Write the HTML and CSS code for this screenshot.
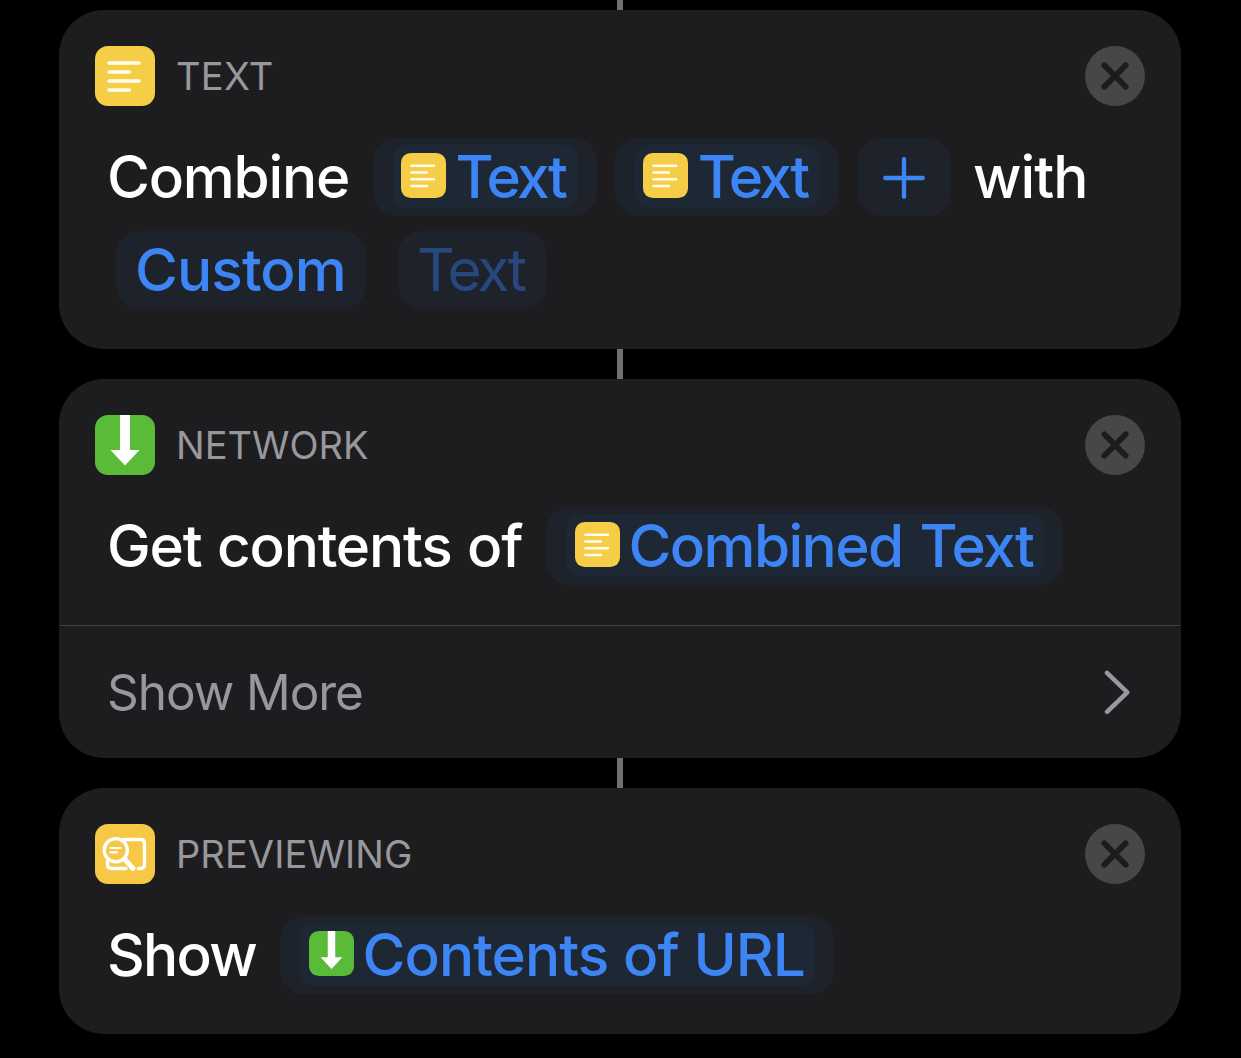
FILE: index.html
```html
<!DOCTYPE html>
<html lang="en">
<head>
<meta charset="utf-8">
<title>Shortcut</title>
<link rel="stylesheet" href="styles.css">
</head>
<body>
<svg class="defs" width="0" height="0" aria-hidden="true">
  <symbol id="text" viewBox="0 0 60 60">
    <rect width="60" height="60" rx="13" fill="#f5cd46"/>
    <path d="M14 17H44M14 26H34.300M14 35H44M14 44H34.300" stroke="#fffdf0" stroke-width="3.600" stroke-linecap="round"/>
  </symbol>
  <symbol id="down" viewBox="0 0 60 60">
    <rect width="60" height="60" rx="13" fill="#59bb38"/>
    <path d="M25 0H35V35H44.500L30 50.500L15.500 35H25Z" fill="#fff"/>
  </symbol>
  <symbol id="preview" viewBox="0 0 60 60">
    <rect width="60" height="60" rx="13" fill="#f6c846"/>
    <g fill="none" stroke="#fff" stroke-linecap="round" stroke-linejoin="round">
      <path d="M28 15.500H45.500Q49.500 15.500 49.500 19.500V40.500Q49.500 44.500 45.500 44.500H43.500M12.500 37V40.500Q12.500 44.500 16.500 44.500H31" stroke-width="3.300"/>
      <circle cx="20.800" cy="26.200" r="11.600" fill="#f6c846" stroke-width="3.300"/>
      <path d="M29.500 35L38 44.500" stroke-width="5"/>
      <path d="M15.500 24H25.500M15.500 28.300H22" stroke-width="2.200"/>
    </g>
  </symbol>
  <symbol id="close" viewBox="0 0 60 60">
    <circle cx="30" cy="30" r="30" fill="#474747"/>
    <path d="M19.300 19.300L40.700 40.700M40.700 19.300L19.300 40.700" stroke="#1c1c1e" stroke-width="5.800" stroke-linecap="round"/>
  </symbol>
</svg>
<main class="flow">
  <div class="link link-top"></div>
  <section class="card">
    <header class="head"><svg class="badge"><use href="#text"/></svg><h2 class="kind kind-text">TEXT</h2><svg class="badge"><use href="#close"/></svg></header>
    <div class="line">
      <span class="word w-combine">Combine</span>
      <span class="chip chip-var"><span class="token"><svg class="mini"><use href="#text"/></svg><span class="t-text">Text</span></span></span>
      <span class="chip chip-var"><span class="token"><svg class="mini"><use href="#text"/></svg><span class="t-text">Text</span></span></span>
      <span class="chip chip-plus"><svg width="42" height="42" viewBox="0 0 42 42"><path d="M21 2.200V39.800M2.200 21H39.800" stroke="#3d84f5" stroke-width="4.300" stroke-linecap="round"/></svg></span>
      <span class="word w-with">with</span>
    </div>
    <div class="line line-second">
      <span class="chip chip-custom">Custom</span>
      <span class="chip chip-hint">Text</span>
    </div>
  </section>
  <div class="link"></div>
  <section class="card card-network">
    <header class="head"><svg class="badge"><use href="#down"/></svg><h2 class="kind kind-network">NETWORK</h2><svg class="badge"><use href="#close"/></svg></header>
    <div class="line">
      <span class="word w-get">Get contents of</span>
      <span class="chip chip-combined"><span class="token"><svg class="mini"><use href="#text"/></svg><span class="t-combined">Combined Text</span></span></span>
    </div>
    <div class="more"><span>Show More</span><svg width="28" height="48" viewBox="0 0 28 48"><path d="M3 4.800L23.300 24.300L3 43.800" fill="none" stroke="#98989d" stroke-width="4.500" stroke-linecap="round" stroke-linejoin="round"/></svg></div>
  </section>
  <div class="link"></div>
  <section class="card card-preview">
    <header class="head"><svg class="badge"><use href="#preview"/></svg><h2 class="kind kind-preview">PREVIEWING</h2><svg class="badge"><use href="#close"/></svg></header>
    <div class="line">
      <span class="word w-show">Show</span>
      <span class="chip chip-url"><span class="token"><svg class="mini"><use href="#down"/></svg><span class="t-url">Contents of URL</span></span></span>
    </div>
  </section>
</main>
</body>
</html>
```
FILE: styles.css
```css
* { box-sizing: border-box; }
body {
  margin: 0;
  background: #000;
  color: #fff;
  font-family: Inter, "Liberation Sans", sans-serif;
}
svg { display: block; flex: none; }
.defs { position: absolute; }
.flow { width: 1122px; margin-left: 59px; }
.link { width: 6px; height: 30px; margin: 0 auto; background: #707074; }
.link-top { height: 10px; }
.card {
  height: 339px;
  padding-top: 36px;
  border-radius: 45px;
  background: #1d1d1f;
  overflow: hidden;
}
.card-network { height: 379px; }
.card-preview { height: 246px; }
.head { display: flex; align-items: center; height: 60px; padding: 0 36px; }
.badge { width: 60px; height: 60px; }
.kind {
  flex: 1;
  margin: 0 0 0 21px;
  color: #98989c;
  font-size: 38px;
  font-weight: 400;
  line-height: 61px;
}
.kind-text { letter-spacing: .3px; }
.kind-preview { letter-spacing: .1px; }
.line {
  display: flex;
  align-items: center;
  height: 78px;
  margin-top: 31.5px;
  padding-left: 48px;
  font-size: 58.5px;
  font-weight: 500;
  line-height: 78px;
  white-space: nowrap;
}
.line-second { margin-top: 15.5px; padding-left: 57px; }
.word { flex: none; }
.w-combine { width: 266px; letter-spacing: -1.2px; }
.w-get { width: 439px; letter-spacing: -1.2px; word-spacing: 1.2px; }
.w-show { width: 173px; letter-spacing: -1.7px; }
.w-with { letter-spacing: -1px; }
.chip {
  display: flex;
  align-items: center;
  justify-content: center;
  flex: none;
  height: 78px;
  border-radius: 24px;
  background: #1e232b;
  color: #3d84f5;
}
.token {
  display: flex;
  align-items: center;
  width: calc(100% - 39px);
  height: 63px;
  padding-left: 8.5px;
  border-radius: 14px;
  background: #1e2734;
}
.mini { width: 45px; height: 45px; margin: 0 9.5px 2px 0; }
.t-text { letter-spacing: -2.6px; }
.t-combined { letter-spacing: -1.6px; word-spacing: 3px; }
.t-url { letter-spacing: -.92px; }
.chip-combined .token, .chip-url .token { padding-left: 9px; }
.chip-combined .mini, .chip-url .mini { margin-right: 9px; }
.chip-var { width: 224px; margin-right: 18.25px; }
.chip-plus { width: 93px; margin-right: 22.5px; }
.chip-plus svg { margin: 2px 1px 0 0; }
.chip-custom {
  justify-content: flex-start;
  width: 250px;
  margin-right: 32px;
  padding-left: 19px;
  letter-spacing: -.9px;
}
.chip-hint {
  justify-content: flex-start;
  width: 149px;
  padding-left: 19px;
  color: #26487f;
  font-weight: 400;
  letter-spacing: -2.8px;
}
.chip-combined { width: 517px; }
.chip-url { width: 554px; }
.more {
  display: flex;
  align-items: center;
  justify-content: space-between;
  height: 133px;
  margin-top: 40.5px;
  padding: 0 49px 0 48px;
  border-top: 1px solid #414144;
  color: #98989c;
  font-size: 49.5px;
  letter-spacing: -1.05px;
}
```
